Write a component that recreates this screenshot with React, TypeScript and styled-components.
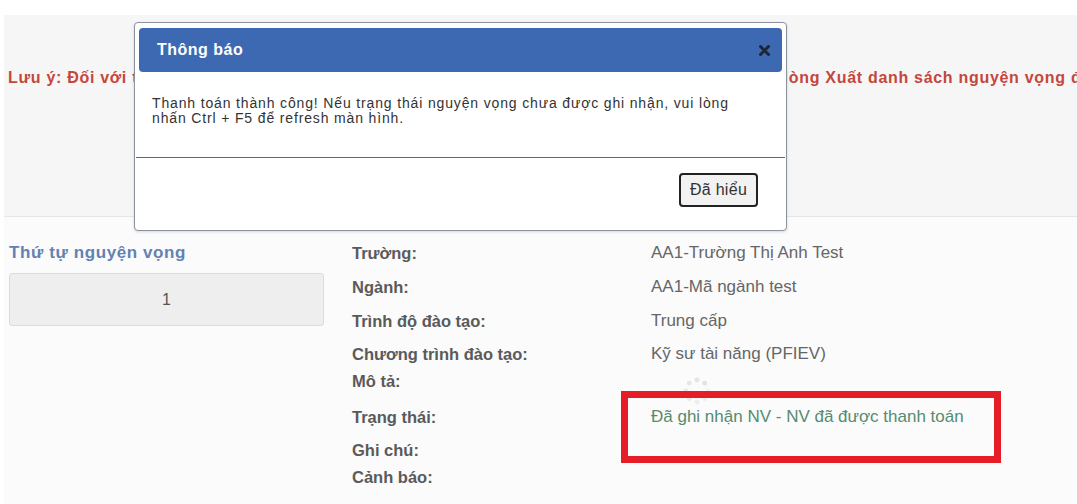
import React from 'react';
import styled, { createGlobalStyle } from 'styled-components';

const GlobalStyle = createGlobalStyle`
    html, body {
        margin: 0;
        padding: 0;
        background: #ffffff;
        font-family: "Liberation Sans", Arial, sans-serif;
    }
`;

const Page = styled.div`
    position: relative;
    width: 1077px;
    height: 504px;
    overflow: hidden;
    padding: 15px 0 0 4px;
    box-sizing: border-box;
`;

const NoticePanel = styled.div`
    height: 202px;
    box-sizing: border-box;
    padding: 53px 0 0 4px;
    background: #f6f6f6;
    border-bottom: 1px solid #e6e6e6;
    overflow: hidden;
`;

const NoticeText = styled.p`
    margin: 0;
    white-space: nowrap;
    font-size: 16px;
    line-height: 20px;
    letter-spacing: 0.7px;
    font-weight: bold;
    color: #c4473c;
`;

const Details = styled.div`
    display: grid;
    grid-template-columns: 343px 299px 1fr;
    padding: 26px 0 0 5px;
    background: #fbfbfb;
    height: 287px;
    box-sizing: border-box;
`;

const OrderColumn = styled.div`
    display: flex;
    flex-direction: column;
    gap: 10px;
`;

const OrderTitle = styled.div`
    font-size: 17px;
    line-height: 20px;
    letter-spacing: 0.6px;
    font-weight: bold;
    color: #6381b3;
`;

const OrderBox = styled.div`
    width: 315px;
    height: 53px;
    box-sizing: border-box;
    display: flex;
    align-items: center;
    justify-content: center;
    background: #eeeeee;
    border: 1px solid #dcdcdc;
    border-radius: 3px;
    font-size: 16px;
    color: #555;
`;

const InfoList = styled.div`
    grid-column: 2 / 4;
    display: flex;
    flex-direction: column;
`;

const InfoRow = styled.div<{ $h: number }>`
    display: grid;
    grid-template-columns: 299px 1fr;
    height: ${p => p.$h}px;
`;

const Label = styled.div`
    font-size: 16.5px;
    line-height: 20px;
    font-weight: bold;
    color: #5a5a5a;
`;

const Value = styled.div<{ $status?: boolean }>`
    position: relative;
    font-size: 17px;
    line-height: 20px;
    color: ${p => (p.$status ? '#568b70' : '#666')};
`;

const Highlight = styled.div`
    position: absolute;
    left: -30px;
    top: -16px;
    width: 380px;
    height: 72px;
    box-sizing: border-box;
    border: 7px solid #e51d27;
`;

const Spinner = styled.svg`
    position: absolute;
    left: 31px;
    top: 5px;
`;

const Modal = styled.div`
    position: absolute;
    left: 134px;
    top: 22px;
    width: 653px;
    height: 209px;
    box-sizing: border-box;
    background: #ffffff;
    border: 1px solid #8c939e;
    border-radius: 4px;
    padding: 5px 4px 0 4px;
    display: flex;
    flex-direction: column;
    box-shadow: 0 1px 3px rgba(0, 0, 0, 0.15);
`;

const ModalHeader = styled.div`
    height: 44px;
    display: flex;
    align-items: center;
    justify-content: space-between;
    padding: 0 12px 0 18px;
    background: #3d69b2;
    border-radius: 4px;
`;

const ModalTitle = styled.span`
    font-size: 16px;
    letter-spacing: 0.5px;
    font-weight: bold;
    color: #ffffff;
`;

const CloseButton = styled.button`
    border: 0;
    padding: 0;
    background: none;
    display: flex;
    cursor: pointer;
`;

const ModalBody = styled.div`
    height: 86px;
    box-sizing: border-box;
    padding: 24px 40px 0 16px;
    margin: 0 -3px;
    font-size: 14px;
    line-height: 15px;
    letter-spacing: 0.85px;
    color: #333;
    border-bottom: 1px solid #666;
`;

const ModalFooter = styled.div`
    flex: 1;
    display: flex;
    justify-content: flex-end;
    align-items: flex-start;
    padding: 15px 24px 0 0;
`;

const Button = styled.button`
    width: 79px;
    height: 34px;
    padding: 0;
    box-sizing: border-box;
    background: #f2f2f2;
    border: 2px solid #222;
    border-radius: 4px;
    font-family: "Liberation Sans", Arial, sans-serif;
    font-size: 16px;
    letter-spacing: 0.3px;
    color: #333;
`;

const rows = [
    { label: 'Trường:', value: 'AA1-Trường Thị Anh Test', h: 34 },
    { label: 'Ngành:', value: 'AA1-Mã ngành test', h: 34 },
    { label: 'Trình độ đào tạo:', value: 'Trung cấp', h: 33 },
    { label: 'Chương trình đào tạo:', value: 'Kỹ sư tài năng (PFIEV)', h: 27 },
    { label: 'Mô tả:', value: '', h: 36, spinner: true },
    { label: 'Trạng thái:', value: 'Đã ghi nhận NV - NV đã được thanh toán', h: 33, status: true },
    { label: 'Ghi chú:', value: '', h: 27 },
    { label: 'Cảnh báo:', value: '', h: 20 },
];

const dots = [0, 1, 2, 3, 4, 5, 6, 7];

const App = () => {
    return (
        <>
            <GlobalStyle />
            <Page>
                <NoticePanel>
                    <NoticeText>
                        Lưu ý: Đối với thí sinh đã đăng ký thanh toán lệ phí xét tuyển trực tuyến, đề nghị thí sinh vui lòng Xuất danh sách nguyện vọng để kiểm tra
                    </NoticeText>
                </NoticePanel>
                <Details>
                    <OrderColumn>
                        <OrderTitle>Thứ tự nguyện vọng</OrderTitle>
                        <OrderBox>1</OrderBox>
                    </OrderColumn>
                    <InfoList>
                        {rows.map(r => (
                            <InfoRow key={r.label} $h={r.h}>
                                <Label>{r.label}</Label>
                                <Value $status={r.status}>
                                    {r.value}
                                    {r.spinner && (
                                        <Spinner width="30" height="30" viewBox="0 0 30 30">
                                            {dots.map(i => {
                                                const a = (i / 8) * Math.PI * 2;
                                                return (
                                                    <circle
                                                        key={i}
                                                        cx={15 + Math.cos(a) * 11}
                                                        cy={15 + Math.sin(a) * 11}
                                                        r={2.4}
                                                        fill="#d6d6d6"
                                                        opacity={0.25 + (i / 8) * 0.5}
                                                    />
                                                );
                                            })}
                                        </Spinner>
                                    )}
                                    {r.status && <Highlight />}
                                </Value>
                            </InfoRow>
                        ))}
                    </InfoList>
                </Details>
                <Modal>
                    <ModalHeader>
                        <ModalTitle>Thông báo</ModalTitle>
                        <CloseButton aria-label="close">
                            <svg width="11" height="11" viewBox="0 0 11 11">
                                <path d="M1.5 1.5 L9.5 9.5 M9.5 1.5 L1.5 9.5" stroke="#1c2634" strokeWidth="3" strokeLinecap="round" />
                            </svg>
                        </CloseButton>
                    </ModalHeader>
                    <ModalBody>
                        Thanh toán thành công! Nếu trạng thái nguyện vọng chưa được ghi nhận, vui lòng nhấn Ctrl + F5 để refresh màn hình.
                    </ModalBody>
                    <ModalFooter>
                        <Button>Đã hiểu</Button>
                    </ModalFooter>
                </Modal>
            </Page>
        </>
    );
};

export default App;
